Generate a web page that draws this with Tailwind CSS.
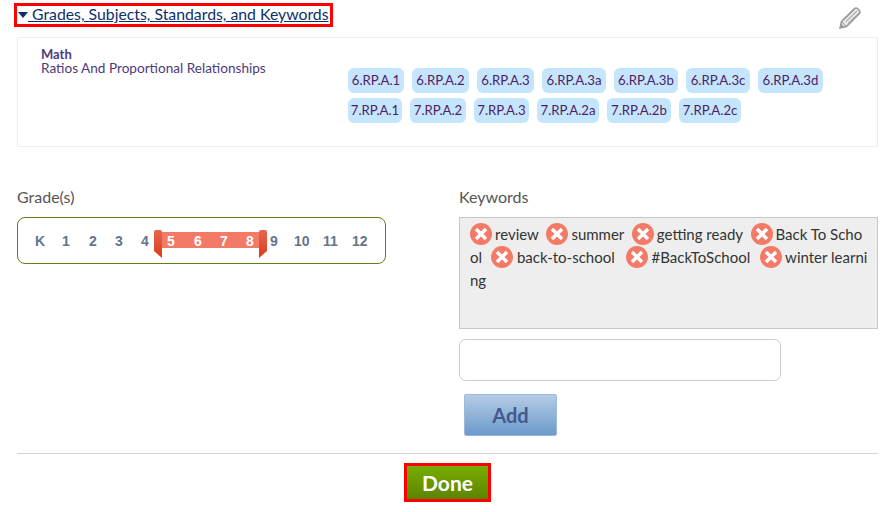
<!DOCTYPE html>
<html lang="en">
<head>
    <meta charset="UTF-8">
    <title>Grades, Subjects, Standards, and Keywords</title>
    <script src="https://cdn.jsdelivr.net/npm/@tailwindcss/browser@4"></script>
</head>
<body class="w-[888px] h-[512px] overflow-hidden bg-white font-['Lato','Open_Sans',sans-serif] text-[#444]">
    <div class="pl-[17px] pr-[10px]">
        <!-- header -->
        <div class="h-[37px] pt-[3px] flex items-start justify-between">
            <a class="-ml-[3px] w-[319px] h-[24px] border-[3px] border-[#f00] flex items-start text-[15.8px] leading-[16px] text-[#0d2f6b] whitespace-nowrap">
                <svg class="w-[10px] h-[6px] shrink-0 ml-[1px] mt-[6px]" viewBox="0 0 10 6"><path d="M0 0h10L5 6z" fill="#0d2f6b"/></svg>
                <span class="underline underline-offset-[1px]">&nbsp;Grades, Subjects, Standards, and Keywords</span>
            </a>
            <svg class="w-[22px] h-[22px] mt-[4px] mr-[17px]" viewBox="0 0 22 22" fill="none" stroke="#9a9a9a">
                <path d="M1 21l1.500-6.500L15.500 1.500q1.500-1 3 0l2 2q1 1.500 0 3L7.500 19.500z" stroke-width="1.500" fill="#e4e4e4"/>
                <path d="M2.500 14.500l5 5M5 12.500L16 2M7 14.500L18 4M9 16.500L20 6" stroke-width="1"/>
                <path d="M1 21l1.500-4 2.500 2.500z" fill="#9a9a9a" stroke="none"/>
            </svg>
        </div>

        <!-- standards card -->
        <div class="h-[110px] border border-[#eee] flex">
            <div class="w-[330px] pl-[23px] pt-[9px] text-[13.6px] leading-[14px] text-[#4f3a78]">
                <div class="font-bold text-[13px]">Math</div>
                <div>Ratios And Proportional Relationships</div>
            </div>
            <div class="pt-[30px] text-[13.2px] text-[#4f1d66]">
                <div class="flex gap-[8px] mb-[5px]">
                    <span class="h-[25px] w-[56px] rounded-[6px] bg-[#c5e5fd] flex items-center justify-center">6.RP.A.1</span>
                    <span class="h-[25px] w-[57px] rounded-[6px] bg-[#c5e5fd] flex items-center justify-center">6.RP.A.2</span>
                    <span class="h-[25px] w-[57px] rounded-[6px] bg-[#c5e5fd] flex items-center justify-center">6.RP.A.3</span>
                    <span class="h-[25px] w-[64px] rounded-[6px] bg-[#c5e5fd] flex items-center justify-center">6.RP.A.3a</span>
                    <span class="h-[25px] w-[64px] rounded-[6px] bg-[#c5e5fd] flex items-center justify-center">6.RP.A.3b</span>
                    <span class="h-[25px] w-[64px] rounded-[6px] bg-[#c5e5fd] flex items-center justify-center">6.RP.A.3c</span>
                    <span class="h-[25px] w-[65px] rounded-[6px] bg-[#c5e5fd] flex items-center justify-center">6.RP.A.3d</span>
                </div>
                <div class="flex gap-[8px]">
                    <span class="h-[25px] w-[54px] rounded-[6px] bg-[#c5e5fd] flex items-center justify-center">7.RP.A.1</span>
                    <span class="h-[25px] w-[56px] rounded-[6px] bg-[#c5e5fd] flex items-center justify-center">7.RP.A.2</span>
                    <span class="h-[25px] w-[55px] rounded-[6px] bg-[#c5e5fd] flex items-center justify-center">7.RP.A.3</span>
                    <span class="h-[25px] w-[62px] rounded-[6px] bg-[#c5e5fd] flex items-center justify-center">7.RP.A.2a</span>
                    <span class="h-[25px] w-[64px] rounded-[6px] bg-[#c5e5fd] flex items-center justify-center">7.RP.A.2b</span>
                    <span class="h-[25px] w-[62px] rounded-[6px] bg-[#c5e5fd] flex items-center justify-center">7.RP.A.2c</span>
                </div>
            </div>
        </div>

        <!-- grades + keywords -->
        <div class="flex mt-[40px]">
            <div class="w-[442px]">
                <div class="h-[20px] text-[16px] leading-[20px] text-[#555]">Grade(s)</div>
                <div class="relative mt-[10px] w-[369px] h-[47px] border border-[#5f7f1f] rounded-[8px] font-['Liberation_Sans',sans-serif] font-bold text-[14px] text-[#64748b]">
                    <div class="absolute left-[144px] top-[14px] w-[97px] h-[16px] bg-[#f47a68]"></div>
                    <div class="absolute left-[136px] top-[12px] w-[8px] h-[28px] rounded-t-[2px] bg-gradient-to-b from-[#e8664d] to-[#d93a16] [clip-path:polygon(0_0,100%_0,100%_100%,0_75%)]"></div>
                    <div class="absolute left-[241px] top-[12px] w-[8px] h-[28px] rounded-t-[2px] bg-gradient-to-b from-[#e8664d] to-[#d93a16] [clip-path:polygon(0_0,100%_0,100%_75%,0_100%)]"></div>
                    <div class="relative flex h-full items-center pt-[1px]">
                        <span class="absolute left-[17px]">K</span>
                        <span class="absolute left-[44px]">1</span>
                        <span class="absolute left-[71px]">2</span>
                        <span class="absolute left-[97px]">3</span>
                        <span class="absolute left-[123px]">4</span>
                        <span class="absolute left-[149px] text-white">5</span>
                        <span class="absolute left-[176px] text-white">6</span>
                        <span class="absolute left-[202px] text-white">7</span>
                        <span class="absolute left-[228px] text-white">8</span>
                        <span class="absolute left-[252px]">9</span>
                        <span class="absolute left-[276px]">10</span>
                        <span class="absolute left-[305px]">11</span>
                        <span class="absolute left-[334px]">12</span>
                    </div>
                </div>
            </div>
            <div class="w-[419px]">
                <div class="h-[20px] text-[16px] leading-[20px] text-[#555]">Keywords</div>
                <div class="mt-[10px] h-[112px] border border-[#c8c8c8] bg-[#eee] pl-[10px] pr-[8px] pt-[5px] text-[15px] leading-[23px] text-[#333] break-all">
                    <span class="inline-block align-[-5px] w-[22px] h-[22px] mr-[3px]"><svg viewBox="0 0 22 22"><circle cx="11" cy="11" r="11" fill="#f47a68"/><path d="M6 6l10 10M16 6L6 16" stroke="#fff" stroke-width="3.500"/></svg></span>review
                    <span class="inline-block align-[-5px] w-[22px] h-[22px] mr-[3px] ml-[4px]"><svg viewBox="0 0 22 22"><circle cx="11" cy="11" r="11" fill="#f47a68"/><path d="M6 6l10 10M16 6L6 16" stroke="#fff" stroke-width="3.500"/></svg></span>summer
                    <span class="inline-block align-[-5px] w-[22px] h-[22px] mr-[3px] ml-[4px]"><svg viewBox="0 0 22 22"><circle cx="11" cy="11" r="11" fill="#f47a68"/><path d="M6 6l10 10M16 6L6 16" stroke="#fff" stroke-width="3.500"/></svg></span>getting ready
                    <span class="inline-block align-[-5px] w-[22px] h-[22px] mr-[3px] ml-[4px]"><svg viewBox="0 0 22 22"><circle cx="11" cy="11" r="11" fill="#f47a68"/><path d="M6 6l10 10M16 6L6 16" stroke="#fff" stroke-width="3.500"/></svg></span>Back To School
                    <span class="inline-block align-[-5px] w-[22px] h-[22px] mr-[4px] ml-[5px]"><svg viewBox="0 0 22 22"><circle cx="11" cy="11" r="11" fill="#f47a68"/><path d="M6 6l10 10M16 6L6 16" stroke="#fff" stroke-width="3.500"/></svg></span>back-to-school
                    <span class="inline-block align-[-5px] w-[22px] h-[22px] mr-[4px] ml-[7px]"><svg viewBox="0 0 22 22"><circle cx="11" cy="11" r="11" fill="#f47a68"/><path d="M6 6l10 10M16 6L6 16" stroke="#fff" stroke-width="3.500"/></svg></span>#BackToSchool
                    <span class="inline-block align-[-5px] w-[22px] h-[22px] mr-[3px] ml-[6px]"><svg viewBox="0 0 22 22"><circle cx="11" cy="11" r="11" fill="#f47a68"/><path d="M6 6l10 10M16 6L6 16" stroke="#fff" stroke-width="3.500"/></svg></span>winter learning
                </div>
                <input type="text" class="block mt-[10px] w-[322px] h-[42px] border border-[#ccc] rounded-[7px] bg-white">
                <button class="block mt-[13px] ml-[5px] w-[93px] h-[42px] border border-[#9db8d8] rounded-[2px] bg-gradient-to-b from-[#b5cbe6] to-[#6b9bcb] text-[20px] font-bold text-[#44598f]">Add</button>
            </div>
        </div>

        <!-- footer -->
        <div class="mt-[17px] border-t border-[#d5d5d5] pt-[9px] flex justify-center">
            <button class="w-[87px] h-[39px] border-[3px] border-[#f00] bg-gradient-to-b from-[#78ad00] to-[#5c8400] text-[21px] font-bold text-white">Done</button>
        </div>
    </div>
</body>
</html>
